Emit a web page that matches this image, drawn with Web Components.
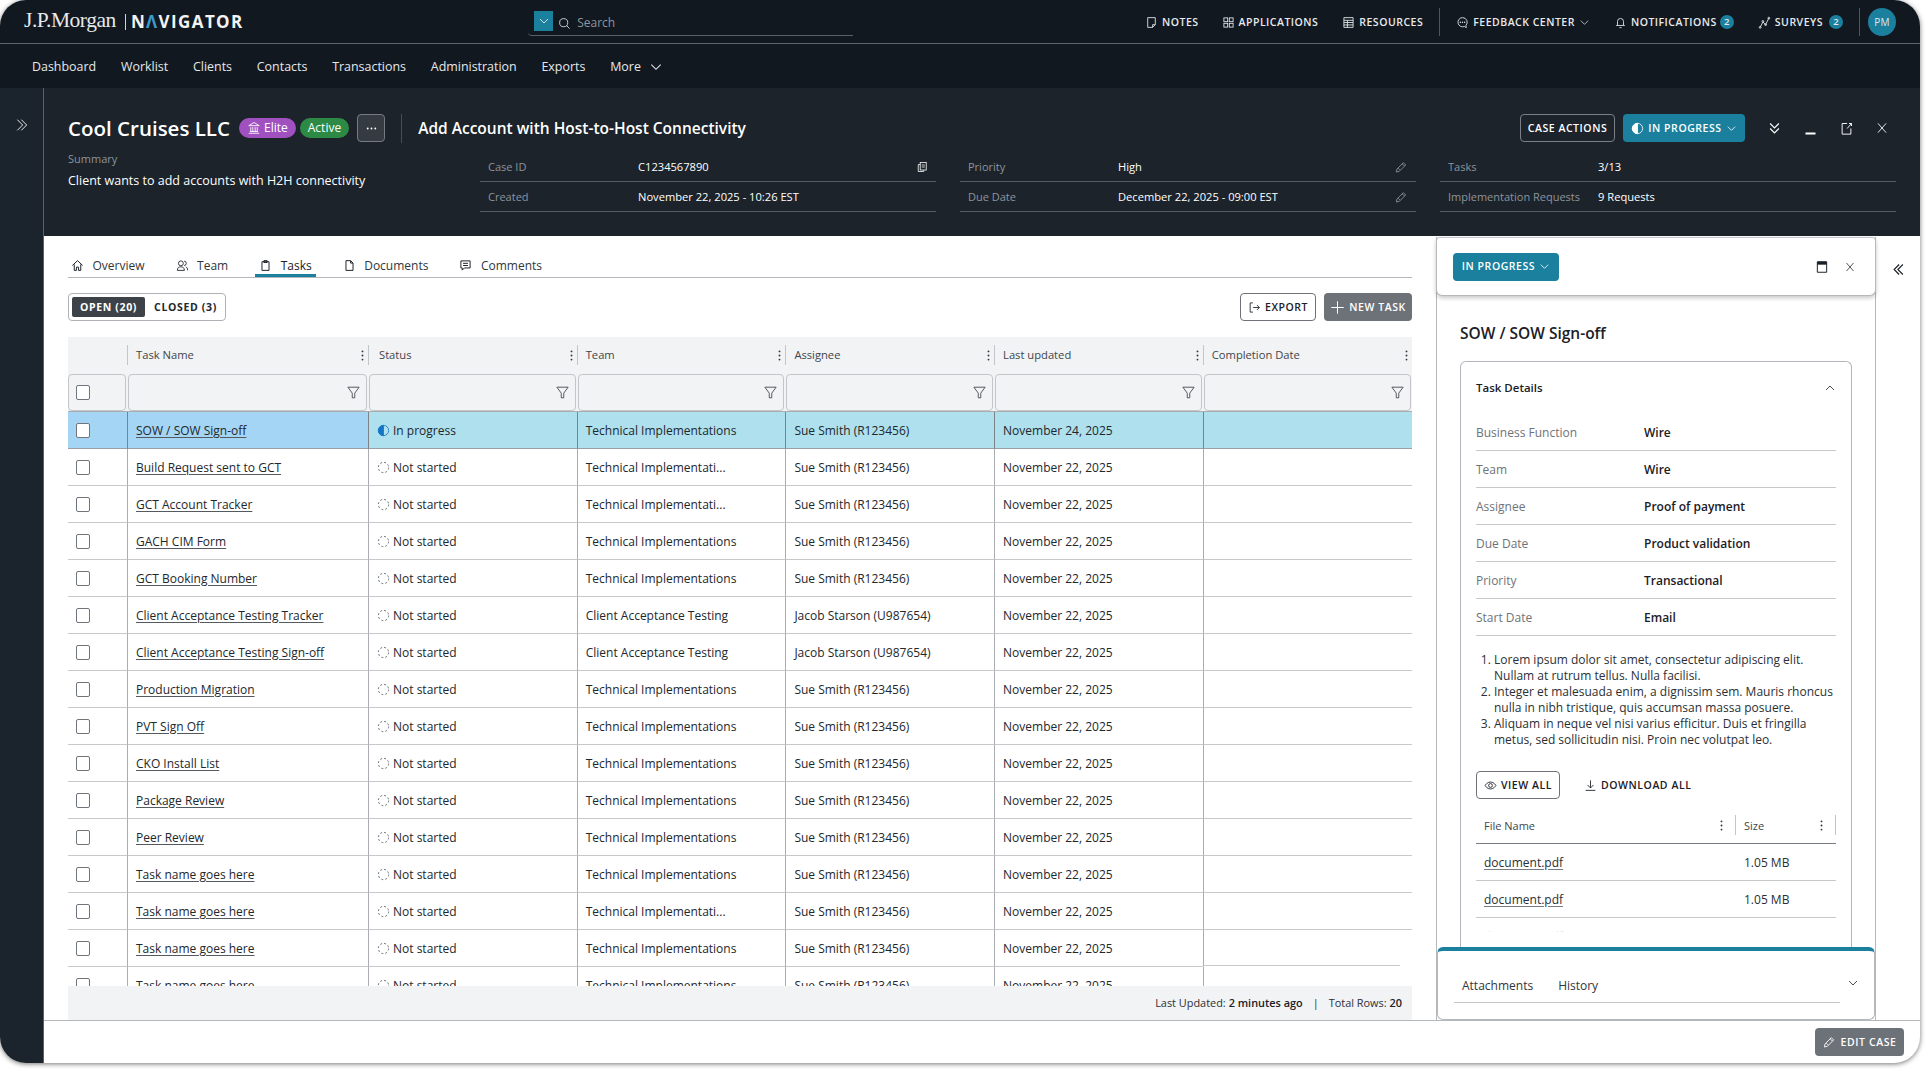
<!DOCTYPE html>
<html lang="en"><head><meta charset="utf-8"><title>Navigator</title>
<style>
html,body{margin:0;padding:0;background:#fff;overflow:hidden;height:1076px}
body{font-family:"Open Sans",sans-serif;color:#1b2026}
</style></head><body>
<app-frame>
  <top-bar></top-bar>
  <main-nav></main-nav>
  <app-body>
    <side-rail slot="rail"></side-rail>
    <case-header slot="header"></case-header>
    <task-workspace slot="tasks"></task-workspace>
    <detail-panel slot="panel"></detail-panel>
    <collapse-rail slot="collapse"></collapse-rail>
    <app-footer slot="footer"></app-footer>
  </app-body>
</app-frame>
<script>
const P={
 note:'<path d="M5 3h14v13l-5 5H5z"/><path d="M14 21v-5h5"/>',
 apps:'<rect x="3.5" y="3.5" width="7" height="7"/><rect x="13.5" y="3.5" width="7" height="7"/><rect x="3.5" y="13.5" width="7" height="7"/><rect x="13.5" y="13.5" width="7" height="7"/>',
 res:'<path d="M3.5 3h17v18h-17z"/><path d="M3.5 8h17M3.5 12h17M3.5 16.500h17M10 8v13"/>',
 feedback:'<path d="M12 3a8.500 8.500 0 1 0 3.500 16.300L19 21.500l-.6-4.200A8.500 8.500 0 0 0 12 3z"/><path d="M8 11.500h.01M12 11.500h.01M16 11.500h.01" stroke-width="2.600" stroke-linecap="round"/>',
 bell:'<path d="M6.500 17v-7a5.500 5.500 0 0 1 11 0v7"/><path d="M4 17.500h16M10 21.500h4"/>',
 survey:'<path d="M4 21l5-10 5 5 6-12"/><circle cx="9" cy="10" r="1.700"/><circle cx="14" cy="16" r="1.700"/><circle cx="20" cy="4" r="1.700"/><circle cx="4" cy="21" r="1.700"/>',
 down:'<path d="M4 8l8 8 8-8"/>',up:'<path d="M4 16l8-8 8 8"/>',
 dright:'<path d="M5 4l8 8-8 8M11 4l8 8-8 8"/>',dleft:'<path d="M19 4l-8 8 8 8M13 4l-8 8 8 8"/>',
 ddown:'<path d="M5 4l7 7 7-7M5 12l7 7 7-7"/>',
 min:'<path d="M4 20h16" stroke-width="3"/>',
 pop:'<path d="M13 4H5v17h14v-9"/><path d="M13 12l7-8M16 4h4v4"/>',
 close:'<path d="M5 4l14 16M19 4L5 20"/>',
 home:'<path d="M2.500 12L12 3l9.500 9"/><path d="M6 10v11h4v-6h4v6h4V10"/>',
 team:'<circle cx="9" cy="8" r="4.500"/><path d="M2.500 21c0-4.500 2.500-6.500 6.500-6.500s6.500 2 6.500 6.500z"/><path d="M15 4a4 4 0 0 1 0 8M18 14.500c2.200.8 3.500 2.800 3.500 6.500"/>',
 clip:'<path d="M5.500 5h13v16h-13z"/><path d="M9 3h6v3.500H9z"/>',
 doc:'<path d="M5.500 3h8.500l4.500 4.500V21h-13z"/><path d="M14 3v4.500h4.500"/>',
 comment:'<path d="M3.500 3.500h17v13H10l-4 4v-4H3.500z"/><path d="M7.500 8h9M7.500 12h9"/>',
 filter:'<path d="M3 3.500h18L14 13v7.500h-4V13z"/>',
 pencil:'<path d="M4 20.500l1-5L16 4.500l4 4-11 11z"/><path d="M14 6.500l4 4M7 14l3 3"/>',
 copy:'<rect x="8.500" y="3" width="12" height="15"/><path d="M8.500 7H4.500v14h11v-3"/><path d="M11.500 8h6M11.500 12h6"/>',
 eye:'<path d="M2 12s3.700-6.500 10-6.500S22 12 22 12s-3.700 6.500-10 6.500S2 12 2 12z"/><circle cx="12" cy="12" r="3.500"/>',
 download:'<path d="M12 2.500v14M6.500 11l5.500 5.500 5.500-5.500M3 21h18"/>',
 plus:'<path d="M12 2v20M2 12h20"/>',
 exp:'<path d="M9 3.500H4v17h5"/><path d="M9.500 12H21M16.500 7.500L21 12l-4.500 4.500"/>',
 bank:'<path d="M12 2.500L3 8h18zM3 21h18M5 18h14M6.500 10.500V18M10 10.500V18M14 10.500V18M17.500 10.500V18"/>',
 win:'<path d="M4 3h16v18H4z"/><path d="M4 5.500h16" stroke-width="5"/>',
 half:'<circle cx="12" cy="12" r="9.500"/><path d="M12 2.500a9.500 9.500 0 0 0 0 19z" fill="currentColor"/>',
 dash:'<circle cx="12" cy="12" r="9.500" stroke-dasharray="3.700 3.760" stroke-width="1.500"/>',
 dots:'<path d="M12 4.500h.01M12 12h.01M12 19.500h.01" stroke-width="3.400" stroke-linecap="round"/>',
 hdots:'<path d="M5 12h.01M12 12h.01M19 12h.01" stroke-width="3.400" stroke-linecap="round"/>',
 search:'<circle cx="10.500" cy="10.500" r="7.500"/><path d="M16 16l5.500 5.500"/>'
};
function def(name,css,html){
 customElements.define(name,class extends HTMLElement{
  constructor(){super();const s=this.attachShadow({mode:'open'});
   s.innerHTML='<style>'+css+'</style>'+(typeof html==='function'?html(this):html);}
 });
}
customElements.define('ui-icon',class extends HTMLElement{
 connectedCallback(){
  const sr=this.shadowRoot||this.attachShadow({mode:'open'});
  const n=this.getAttribute('name'),sz=this.getAttribute('size')||14,sw=this.getAttribute('sw')||1.6;
  sr.innerHTML=`<style>:host{display:inline-flex;flex:none;line-height:0}</style><svg width="${sz}" height="${sz}" viewBox="0 0 24 24" fill="none" stroke="currentColor" stroke-width="${sw}">${P[n]}</svg>`;
 }
});
const I=(n,s,sw,st)=>`<ui-icon name="${n}" size="${s||14}" sw="${sw||1.6}" style="${st||''}"></ui-icon>`;

def('x-button',`:host{display:inline-flex;align-items:center;justify-content:center;gap:4px;height:28px;box-sizing:border-box;border-radius:4px;padding:0 7px;font:700 10.500px/1 "Open Sans",sans-serif;letter-spacing:.55px;white-space:nowrap;text-transform:uppercase}
:host([variant=outline-dark]){border:1px solid #7b8087;color:#fff}
:host([variant=teal]){background:#1b7f9e;color:#fff}
:host([variant=outline]){border:1px solid #6e7278;color:#1b2026;background:#fff}
:host([variant=gray]){background:#6d7278;color:#fff}
:host([variant=plain]){color:#1b2026}`,'<slot></slot>');

def('app-frame',`:host{display:flex;flex-direction:column;width:1920px;height:1063px;border-radius:26px;overflow:hidden;background:#fff;box-shadow:0 1px 5px rgba(0,0,0,.55)}`,'<slot></slot>');

def('top-bar',`:host{display:flex;align-items:center;height:44px;box-sizing:border-box;background:#111820;border-bottom:1px solid #5e646b;padding:0 24px 0 24px;color:#e8eaec}
.jp{font:400 21.500px/1 "Liberation Serif",serif;letter-spacing:-.45px;color:#e8e9ea;position:relative;top:-1px}
.bar{width:1px;height:16px;background:#cfd2d5;margin:0 5px 0 9px}
.nav{font:700 17px/1 "Open Sans",sans-serif;letter-spacing:1.4px;color:#f2f3f4}.nav b{color:#3c9ad0;font-weight:700}
.search{display:flex;align-items:center;width:325px;height:24px;margin-left:284.500px;border-bottom:1px solid #596069;border-radius:0 0 0 4px;position:relative;top:2px;box-sizing:content-box;padding-bottom:0}
.sel{display:flex;align-items:center;justify-content:center;width:19px;height:20px;background:#1b7f9e;margin-left:7px;position:relative;top:-2px;color:#fff}
.search ui-icon{color:#d6d9dc}.search span{font:400 12px/1 "Open Sans",sans-serif;color:#8f959c;margin-left:6px}
.right{display:flex;align-items:center;margin-left:auto;margin-top:1px;font:600 10.500px/1 "Open Sans",sans-serif;letter-spacing:.5px}
.i{display:flex;align-items:center;gap:4px;margin-right:24px;white-space:nowrap}
.i.n{margin-right:23px}
.i.t{margin-right:16px}.sep{width:1px;height:28px;background:#50565d;margin-right:16px}
.bd{display:inline-flex;align-items:center;justify-content:center;width:14px;height:14px;border-radius:50%;background:#1b7f9e;font-size:9.500px;letter-spacing:0;margin-left:2px}
.bd.m{margin-left:-1px}
.av{display:flex;align-items:center;justify-content:center;width:28px;height:28px;border-radius:50%;background:#1b7f9e;font:500 10px/1 "Open Sans",sans-serif;letter-spacing:.3px;margin-left:8px;color:#dfe8ec}`,
`<span class="jp">J.P.Morgan</span><span class="bar"></span><span class="nav">N<b>Λ</b>VIGATOR</span>
<div class="search"><span class="sel">${I('down',12,2)}</span><span style="margin-left:5px;display:inline-flex">${I('search',13,1.700)}</span><span>Search</span></div>
<div class="right">
<div class="i n">${I('note',13)}NOTES</div><div class="i">${I('apps',13)}APPLICATIONS</div><div class="i t">${I('res',13)}RESOURCES</div><div class="sep"></div>
<div class="i">${I('feedback',13)}FEEDBACK CENTER${I('down',11)}</div><div class="i">${I('bell',13)}NOTIFICATIONS<span class="bd m">2</span></div><div class="i t">${I('survey',13)}SURVEYS<span class="bd">2</span></div><div class="sep" style="margin-right:0"></div><div class="av">PM</div>
</div>`);

def('main-nav',`:host{display:flex;align-items:center;gap:24.750px;height:44px;padding-top:2px;box-sizing:border-box;background:#111820;padding-left:32px;color:#e6e8ea;font:500 12.450px/1 "Open Sans",sans-serif}
span{display:inline-flex;align-items:center;gap:8px}`,
`<span>Dashboard</span><span>Worklist</span><span>Clients</span><span>Contacts</span><span>Transactions</span><span>Administration</span><span>Exports</span><span>More ${I('down',14,1.800)}</span>`);

def('app-body',`:host{display:grid;flex:1;min-height:0;grid-template-columns:44px 1392px 440px 44px;grid-template-rows:148px 784px 43px}
::slotted([slot=rail]){grid-row:1/4}::slotted([slot=header]){grid-column:2/5}::slotted([slot=footer]){grid-column:2/5}`,
`<slot name="rail"></slot><slot name="header"></slot><slot name="tasks"></slot><slot name="panel"></slot><slot name="collapse"></slot><slot name="footer"></slot>`);

def('side-rail',`:host{display:block;background:#1b242c;border-right:1px solid #5a6067;box-sizing:border-box;color:#e8eaec;padding:28px 0 0 14px}`,I('dright',16,1.500));

def('collapse-rail',`:host{display:block;padding:24px 0 0 15px;color:#1b2026}`,I('dleft',15,1.800));

def('field-row',`:host{display:flex;align-items:center;height:30px;box-sizing:border-box;border-bottom:1px solid #565c63;padding:0 8px;color:#fff;font:500 11.150px/1 "Open Sans",sans-serif}
.l{width:150px;color:#8e949b;font-weight:400;font-size:11px;white-space:nowrap}.v{flex:1}ui-icon,::slotted(*){color:#8e949b}`,
h=>`<span class="l">${h.getAttribute('label')}</span><span class="v">${h.getAttribute('value')}</span><slot></slot>`);

def('case-header',`:host{display:block;background:#1c232b;color:#fff;padding:26px 24px 0;box-sizing:border-box}
.r1{display:flex;align-items:center;height:28px}
h1{font:600 20.500px/1 "Open Sans",sans-serif;margin:0 9px 0 0;white-space:nowrap}
.b{display:inline-flex;align-items:center;gap:3px;height:20px;border-radius:10px;padding:0 8px;font:400 12px/1 "Open Sans",sans-serif;box-sizing:border-box}
.el{background:#a150c0;margin-right:4px}.ac{background:#2c8a45;margin-right:8px}
.more{display:flex;align-items:center;justify-content:center;width:28px;height:28px;box-sizing:border-box;border:1px solid #767b82;background:#363b42;border-radius:4px}
.vs{width:1px;height:29px;background:#474d54;margin:0 16px}
h2{font:600 15.500px/1 "Open Sans",sans-serif;margin:1px 0 0;white-space:nowrap}
.acts{margin-left:auto;display:flex;align-items:center;gap:8px}.ic{display:flex;gap:21px;align-items:center;margin:0 7px 0 14px}
.r2{display:flex;margin-top:10px}
.sum{width:412px;font:500 12.500px/1 "Open Sans",sans-serif}.sum div:first-child{color:#8e949b;font-weight:400;font-size:11px;margin:1px 0 11px}.sum div{white-space:nowrap}
.g{display:grid;grid-template-columns:repeat(3,456px);gap:0 24px}`,
`<div class="r1"><h1>Cool Cruises LLC</h1><span class="b el">${I('bank',14,1.500)}Elite</span><span class="b ac">Active</span><span class="more">${I('hdots',13)}</span><span class="vs"></span><h2>Add Account with Host-to-Host Connectivity</h2>
<div class="acts"><x-button variant="outline-dark" style="width:95px;padding:0;font-weight:600">Case Actions</x-button><x-button variant="teal" style="width:122px;padding:0;font-weight:600">${I('half',13,1.500)}In Progress${I('down',11,1.800)}</x-button><div class="ic">${I('ddown',15,1.800)}${I('min',15,1.800)}${I('pop',15,1.500)}${I('close',14,1.500)}</div></div></div>
<div class="r2"><div class="sum"><div>Summary</div><div>Client wants to add accounts with H2H connectivity</div></div>
<div class="g">
<field-row label="Case ID" value="C1234567890">${I('copy',12,1.800,'color:#e2e4e6')}</field-row>
<field-row label="Priority" value="High">${I('pencil',14,1.500)}</field-row>
<field-row label="Tasks" value="3/13"></field-row>
<field-row label="Created" value="November 22, 2025 - 10:26 EST"></field-row>
<field-row label="Due Date" value="December 22, 2025 - 09:00 EST">${I('pencil',14,1.500)}</field-row>
<field-row label="Implementation Requests" value="9 Requests"></field-row>
</div></div>`);

def('task-workspace',`:host{display:flex;flex-direction:column;padding:0 24px;box-sizing:border-box;min-height:0;overflow:hidden}
.tabs{display:flex;height:41px;flex:none;align-items:flex-end;border-bottom:1px solid #b3b6ba;box-sizing:content-box;font:400 12px/1 "Open Sans",sans-serif;color:#30363c;padding-left:0}
.t{display:flex;align-items:center;gap:8.500px;box-sizing:border-box;padding:4px 4px 0;margin-right:23px;border-bottom:3px solid transparent;white-space:nowrap;height:24px}
.t:first-child{margin-left:-1px}
.t.on{border-bottom-color:#1b7f9e;color:#1b2026}.t ui-icon{color:#1b2026}
.bar{display:flex;align-items:center;justify-content:space-between;height:28px;margin:15px 0 16px;flex:none}
.seg{display:flex;align-items:center;height:28px;box-sizing:border-box;border:1px solid #aeb1b5;border-radius:4px;padding:3px;font:700 10.500px/1 "Open Sans",sans-serif;letter-spacing:.65px;color:#22272d;width:158px}
.seg span{display:flex;align-items:center;justify-content:center;height:20px}
.seg .on{background:#3c4248;color:#fff;width:73px;border-radius:2px}.seg .off{flex:1;padding-left:4px}
.btns{display:flex;gap:8px}`,
`<div class="tabs"><div class="t">${I('home',13,1.800)}Overview</div><div class="t">${I('team',13,1.600)}Team</div><div class="t on">${I('clip',13,1.800)}Tasks</div><div class="t">${I('doc',13,1.800)}Documents</div><div class="t" style="margin-right:0">${I('comment',13,1.800)}Comments</div></div>
<div class="bar"><div class="seg"><span class="on">OPEN (20)</span><span class="off">CLOSED (3)</span></div><div class="btns"><x-button variant="outline" style="width:76px;font-weight:600">${I('exp',13,1.600)}Export</x-button><x-button variant="gray" style="width:88px;font-weight:600">${I('plus',15,1.600)}New Task</x-button></div></div>
<task-table></task-table>`);

const COLS='59px 241px 208.700px 208.700px 208.700px 208.700px 1fr';
def('task-cell',`:host{display:flex;align-items:center;gap:5px;padding:1px 0 0 8px;box-sizing:border-box;border-left:1px solid #a9acb0;border-bottom:1px solid #c7c9cc;min-width:0;white-space:nowrap;overflow:hidden}
:host([first]){border-left:0;padding-left:8px}`,'<slot></slot>');
def('x-check',`:host{display:block;width:14px;height:15px;box-sizing:border-box;border:1px solid #70757b;border-radius:2px;background:#fff;flex:none}`,'');

customElements.define('task-row',class extends HTMLElement{
 constructor(){super();this.attachShadow({mode:'open'});}
 connectedCallback(){
  const a=k=>this.getAttribute(k),sel=this.hasAttribute('selected');
  const st=sel?`${I('half',13,1.500,'color:#1576c5;margin-right:-2px')}In progress`:`${I('dash',13,1.500,'color:#4f5459;margin-right:-2px')}Not started`;
  this.shadowRoot.innerHTML=`<style>:host{display:grid;grid-template-columns:${COLS};height:37px;font:400 12px/1 "Open Sans",sans-serif;color:#22272c}
  a{color:#22272c;text-decoration:underline;text-underline-offset:1.500px;text-decoration-color:#555a60}
  :host([selected]) task-cell{border-bottom-color:#9aa0a5;border-left-color:#7d8286}
  :host([selected]) task-cell.a{background:#a5d5f4}:host([selected]) task-cell.b{background:#aee0ee}
  :host([cut]) task-cell:last-child{border-bottom-color:transparent;background:linear-gradient(#c7c9cc,#c7c9cc) 0 100%/196px 1px no-repeat}
  </style>
  <task-cell first class="a"><x-check></x-check></task-cell><task-cell class="a"><a>${a('name')}</a></task-cell><task-cell class="b">${st}</task-cell><task-cell class="b">${a('team')}</task-cell><task-cell class="b">${a('who')}</task-cell><task-cell class="b">${a('date')}</task-cell><task-cell class="b"></task-cell>`;
 }
});

const rows=[['SOW / SOW Sign-off',0,0,'November 24, 2025'],['Build Request sent to GCT',1],['GCT Account Tracker',1],['GACH CIM Form'],['GCT Booking Number'],['Client Acceptance Testing Tracker',2],['Client Acceptance Testing Sign-off',2],['Production Migration'],['PVT Sign Off'],['CKO Install List'],['Package Review'],['Peer Review'],['Task name goes here'],['Task name goes here',1],['Task name goes here'],['Task name goes here']];
const heads=['Task Name','Status','Team','Assignee','Last updated','Completion Date'];
def('task-table',`:host{display:flex;flex-direction:column;flex:1;min-height:0;width:1344px;background:#f2f3f5;font:400 11.200px/1 "Open Sans",sans-serif;color:#3f454b;border-bottom:0}
.h{display:grid;grid-template-columns:${COLS};height:36px;padding-bottom:1px;align-items:center;flex:none}
.hc{display:flex;align-items:center;justify-content:space-between;height:20px;border-left:1px solid #c3c6c9;padding:0 0 0 8px;margin-right:0}
.hc.s span{padding-left:2px}
.hc ui-icon{color:#30353b;margin-right:-1px}
.f{display:grid;grid-template-columns:${COLS};height:37px;flex:none;border-bottom:1px solid #a9acb0;box-sizing:content-box}
.fc{display:flex;align-items:center;justify-content:flex-end;padding-right:5px;border:1px solid #c3c5c9;border-radius:4px;margin:0 1px;box-sizing:border-box;color:#41464c}
.fc:first-child{justify-content:flex-start;padding-left:7px;margin-left:0}
.b{height:574px;background:#fff;overflow:hidden;flex:none}
.foot{display:flex;flex:1;align-items:center;justify-content:flex-end;padding-right:10px;font-size:10.900px;color:#2a2f35;white-space:nowrap}
.foot b{font-weight:600;color:#1b2026;margin-left:3px}.foot i{font-style:normal;margin:0 10px}`,
`<div class="h"><div></div>${heads.map((t,i)=>`<div class="hc${i===1?' s':''}"><span>${t}</span>${I('dots',13,1.500)}</div>`).join('')}</div>
<div class="f"><div class="fc"><x-check></x-check></div>${heads.map(()=>`<div class="fc">${I('filter',15,1.400)}</div>`).join('')}</div>
<div class="b">${rows.map((r,i)=>{
 const t=r[1]===1?'Technical Implementati...':r[1]===2?'Client Acceptance Testing':'Technical Implementations';
 const w=r[1]===2?'Jacob Starson (U987654)':'Sue Smith (R123456)';
 return `<task-row name="${r[0]}" team="${t}" who="${w}" date="${r[3]||'November 22, 2025'}"${i===0?' selected':''}${i===14?' cut':''}></task-row>`;}).join('')}</div>
<div class="foot">Last Updated:<b>2 minutes ago</b><i>|</i>Total Rows:<b>20</b></div>`);

def('detail-row',`:host{display:flex;align-items:center;height:37px;padding-top:1px;box-sizing:border-box;border-bottom:1px solid #c6c8cb;font:400 12px/1 "Open Sans",sans-serif;color:#6e7379}
b{position:absolute;margin-left:168px;font-weight:600;color:#1b2026}`,
h=>`<span>${h.getAttribute('label')}</span><b>${h.getAttribute('value')}</b>`);

def('detail-panel',`:host{display:flex;flex-direction:column;height:783px;margin-top:1px;box-sizing:border-box;border-left:1px solid #b5b8bb;border-right:1px solid #b5b8bb;min-height:0;position:relative}
.head{display:flex;align-items:center;height:59px;flex:none;box-sizing:border-box;margin:0 -1px;border:1px solid #b5b8bb;border-top-color:#c5c7ca;border-radius:4px 4px 6px 6px;padding:0 19px 0 16px;box-shadow:0 2px 4px rgba(0,0,0,.22);background:#fff;position:relative;z-index:1;color:#1b2026}
.head .s{margin-left:auto;display:flex;align-items:center;gap:15px}
.scroll{flex:1;min-height:0;overflow:hidden;padding:0 23px 0 23px}
h3{font:600 15.500px/24px "Open Sans",sans-serif;margin:25px 0 16px;color:#1b2026}
.card{border:1px solid #b3b6ba;border-bottom:0;border-radius:6px 6px 0 0;padding:0 15px;min-height:600px}
.ch{display:flex;align-items:center;justify-content:space-between;height:52px;font:600 11.500px/1 "Open Sans",sans-serif;color:#1b2026;padding-right:0}
ol{margin:16px 0 23px;padding:0 0 0 18px;font:400 12px/16px "Open Sans",sans-serif;color:#2a2f35}
.btns{display:flex;align-items:center;gap:24px}
.ft{display:grid;grid-template-columns:260px 100px;margin-top:8px;font:400 11px/1 "Open Sans",sans-serif;color:#41464c}
.fh{display:flex;align-items:center;justify-content:space-between;height:37px;border-bottom:1px solid #777c82;padding-left:8px;box-sizing:border-box}
.fh span.l{display:flex;align-items:center;height:20px;border-right:1px solid #c3c6c9;padding-right:7px;color:#30353b;margin-left:auto}
.fr{display:flex;align-items:center;height:37px;padding-top:1px;box-sizing:border-box;border-bottom:1px solid #c6c8cb;padding-left:8px;font-size:12px;color:#2a2f35}
.fr.u{text-decoration:underline;text-underline-offset:2px;text-decoration-color:#777c82}
.fade{height:14px;overflow:hidden;padding-top:11px;font-size:12px;padding-left:8px;color:#e4e5e7;box-sizing:border-box;line-height:16px}
.foot{height:73px;flex:none;margin:0;border:1px solid #b5b8bb;border-top:4px solid #1b7f9e;border-radius:6px;box-sizing:border-box;background:#fff;padding:16px 15px 0 16px;position:relative;z-index:1;display:flex;align-items:flex-start;gap:7px}
.ftabs{flex:1;display:flex;gap:25px;height:36px;box-sizing:border-box;align-items:center;border-bottom:1px solid #c3c5c8;padding:2px 8px 0;font:400 12px/1 "Open Sans",sans-serif;color:#30363c}
.foot ui-icon{margin-top:10px;color:#1b2026}`,
`<div class="head"><x-button variant="teal" style="padding:0 8px;font-weight:600;width:106px">In Progress${I('down',11,1.800)}</x-button><div class="s">${I('win',14,1.700)}${I('close',12,1.500)}</div></div>
<div class="scroll"><h3>SOW / SOW Sign-off</h3>
<div class="card"><div class="ch"><span>Task Details</span>${I('up',12,1.600)}</div>
<detail-row label="Business Function" value="Wire"></detail-row><detail-row label="Team" value="Wire"></detail-row><detail-row label="Assignee" value="Proof of payment"></detail-row><detail-row label="Due Date" value="Product validation"></detail-row><detail-row label="Priority" value="Transactional"></detail-row><detail-row label="Start Date" value="Email"></detail-row>
<ol><li>Lorem ipsum dolor sit amet, consectetur adipiscing elit. Nullam at rutrum tellus. Nulla facilisi.</li><li>Integer et malesuada enim, a dignissim sem. Mauris rhoncus nulla in nibh tristique, quis accumsan massa posuere.</li><li>Aliquam in neque vel nisi varius efficitur. Duis et fringilla metus, sed sollicitudin nisi. Proin nec volutpat leo.</li></ol>
<div class="btns"><x-button variant="outline" style="width:84px;font-weight:600">${I('eye',13,1.600)}View All</x-button><x-button variant="plain" style="font-weight:600;padding:0">${I('download',13,1.600)}Download All</x-button></div>
<div class="ft"><div class="fh"><span>File Name</span><span class="l" style="gap:3px">${I('dots',13,1.500)}</span></div><div class="fh"><span>Size</span><span class="l" style="gap:3px">${I('dots',13,1.500)}</span></div>
<div class="fr u">document.pdf</div><div class="fr">1.05 MB</div><div class="fr u">document.pdf</div><div class="fr">1.05 MB</div><div class="fade">document.pdf</div><div class="fade">1.05 MB</div></div>
</div></div>
<div class="foot"><div class="ftabs"><span>Attachments</span><span>History</span></div>${I('down',12,1.600)}</div>`);

def('app-footer',`:host{display:flex;align-items:center;justify-content:flex-end;border-top:1px solid #b5b8bb;box-sizing:border-box;padding:0 16px 0 0}`,
`<x-button variant="gray" style="width:89px;font-weight:600;letter-spacing:.6px">${I('pencil',14,1.500)}Edit Case</x-button>`);
</script>
</body></html>
